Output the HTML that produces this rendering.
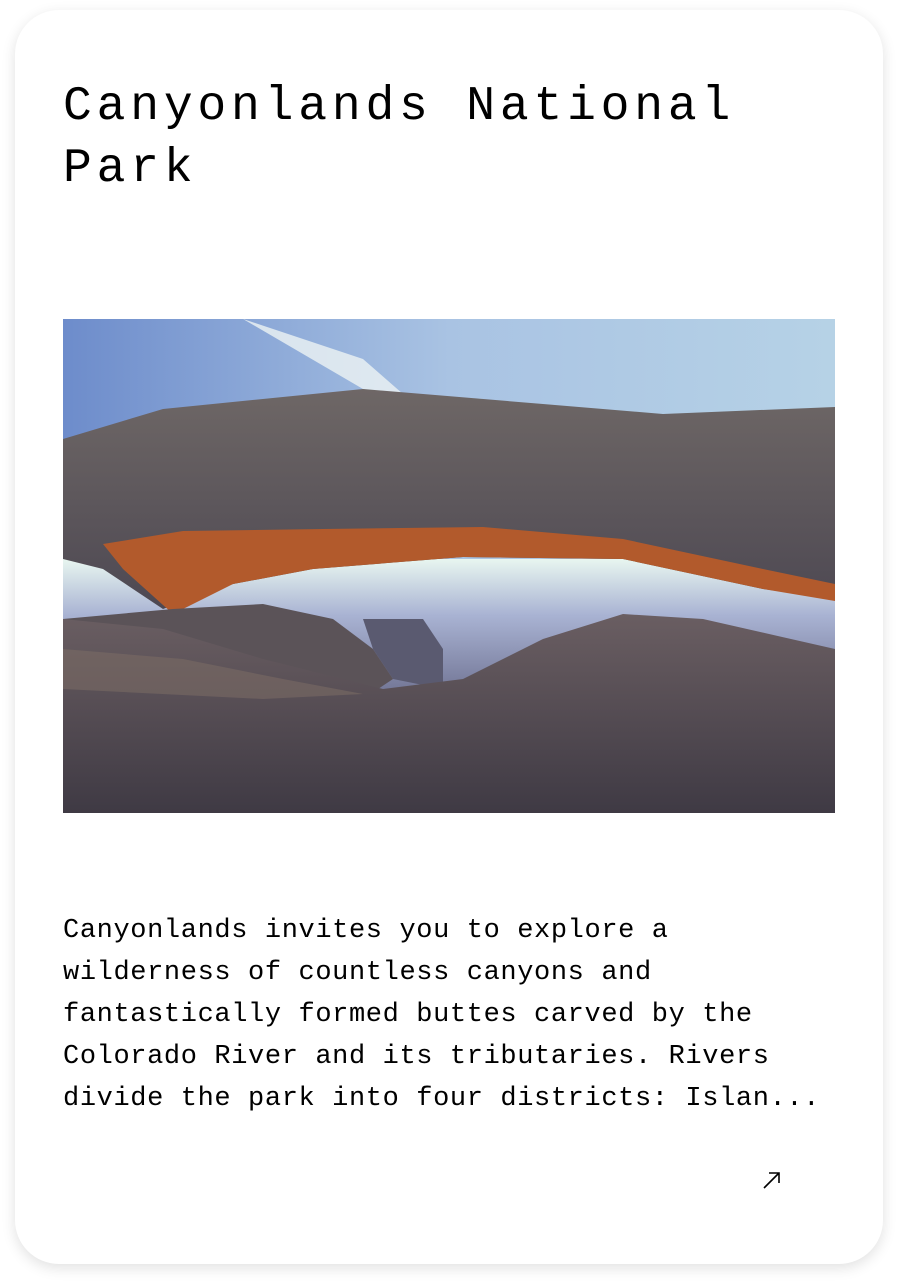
<!DOCTYPE html>
<html><head><style>
body{margin:0;width:902px;height:1286px;background:#fff;overflow:hidden;font-family:"Liberation Mono",monospace;}
.card{position:absolute;left:15px;top:10px;width:868px;height:1254px;border-radius:44px;background:#fff;box-shadow:0 4px 14px rgba(0,0,0,0.12);}
h1{position:absolute;left:63px;top:76px;margin:0;font-weight:normal;font-size:48px;letter-spacing:4.8px;line-height:62px;color:#000;width:760px}
.img{position:absolute;left:63px;top:319px;width:772px;height:494px;overflow:hidden;background:#4a4650}
p{position:absolute;left:63px;top:910px;margin:0;font-size:27px;letter-spacing:0.62px;line-height:42px;color:#000;width:820px;white-space:nowrap}
</style></head><body>
<div class="card"></div>
<h1>Canyonlands National Park</h1>
<div class="img">
<svg width="772" height="494" viewBox="0 0 772 494">
<defs>
<linearGradient id="sky" x1="0" y1="0" x2="1" y2="0"><stop offset="0" stop-color="#6d8ccb"/><stop offset="0.5" stop-color="#a9c3e3"/><stop offset="1" stop-color="#b6d2e6"/></linearGradient>
<linearGradient id="rock" x1="0" y1="0" x2="0" y2="1"><stop offset="0" stop-color="#6e6766"/><stop offset="1" stop-color="#4d4852"/></linearGradient>
<linearGradient id="open" x1="0" y1="0" x2="0" y2="1"><stop offset="0" stop-color="#e8f6f0"/><stop offset="0.4" stop-color="#a9b3d3"/><stop offset="1" stop-color="#6e7191"/></linearGradient>
<linearGradient id="low" x1="0" y1="0" x2="0" y2="1"><stop offset="0" stop-color="#6a5e62"/><stop offset="1" stop-color="#3f3a44"/></linearGradient>
</defs>
<rect width="772" height="494" fill="url(#sky)"/>
<path d="M180 0 L300 40 L340 75 L420 80 L480 95 L380 90 L300 70 Z" fill="#eef4f4" opacity="0.8"/>
<rect x="0" y="240" width="772" height="140" fill="url(#open)"/>
<path d="M0 120 L100 90 L300 70 L480 85 L600 95 L772 88 L772 280 L700 270 L560 240 L400 238 L250 250 L170 265 L100 290 L40 250 L0 240 Z" fill="url(#rock)"/>
<path d="M40 225 L120 212 L260 210 L420 208 L560 220 L700 250 L772 265 L772 282 L700 270 L560 240 L400 238 L250 250 L170 265 L110 295 L60 250 Z" fill="#b25a2c"/>
<path d="M110 290 L200 285 L270 300 L310 330 L330 360 L300 380 L0 380 L0 300 Z" fill="#5b5358"/>
<path d="M300 300 L310 330 L330 360 L380 370 L380 330 L360 300 Z" fill="#5a5a70"/>
<path d="M0 300 L100 310 L200 340 L320 370 L400 360 L480 320 L560 295 L640 300 L772 330 L772 494 L0 494 Z" fill="url(#low)"/>
<path d="M0 330 L120 340 L220 360 L300 375 L200 380 L0 370 Z" fill="#7a6a64" opacity="0.6"/>
</svg>
</div>
<p>Canyonlands invites you to explore a<br>wilderness of countless canyons and<br>fantastically formed buttes carved by the<br>Colorado River and its tributaries. Rivers<br>divide the park into four districts: Islan...</p>
<svg style="position:absolute;left:762px;top:1170px" width="20" height="20" viewBox="0 0 20 20"><path d="M2 18 L17 3 M7 3 H17 V13" fill="none" stroke="#000" stroke-width="1.6"/></svg>
</body></html>
